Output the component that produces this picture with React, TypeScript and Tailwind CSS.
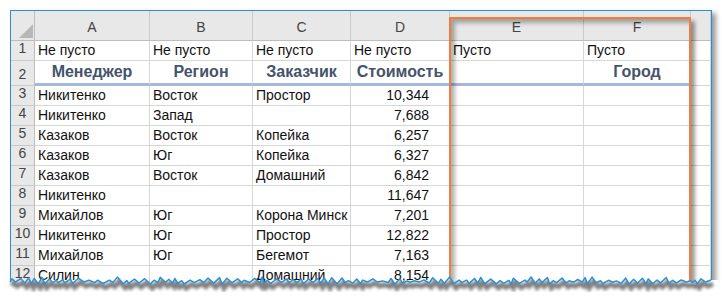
import { useMemo } from 'react'

type Row = { n: number; cells: string[] }

const rows: Row[] = [
  { n: 3, cells: ['Никитенко', 'Восток', 'Простор', '10,344'] },
  { n: 4, cells: ['Никитенко', 'Запад', '', '7,688'] },
  { n: 5, cells: ['Казаков', 'Восток', 'Копейка', '6,257'] },
  { n: 6, cells: ['Казаков', 'Юг', 'Копейка', '6,327'] },
  { n: 7, cells: ['Казаков', 'Восток', 'Домашний', '6,842'] },
  { n: 8, cells: ['Никитенко', '', '', '11,647'] },
  { n: 9, cells: ['Михайлов', 'Юг', 'Корона Минск', '7,201'] },
  { n: 10, cells: ['Никитенко', 'Юг', 'Простор', '12,822'] },
  { n: 11, cells: ['Михайлов', 'Юг', 'Бегемот', '7,163'] },
  { n: 12, cells: ['Силин', '', 'Домашний', '8,154'] },
  { n: 13, cells: ['', '', '', ''] },
]

const columns = ['A', 'B', 'C', 'D', 'E', 'F', '']
const row1 = ['Не пусто', 'Не пусто', 'Не пусто', 'Не пусто', 'Пусто', 'Пусто', '']
const row2 = ['Менеджер', 'Регион', 'Заказчик', 'Стоимость', '', 'Город', '']

const headCell = 'bg-[#e8e8e8] border-r border-b border-[#c9c9c9] text-[#444] flex justify-center'
const gridCell = 'border-r border-b border-[#d6d6d6] flex items-end px-[3px] pb-[1px] leading-[17px] whitespace-nowrap overflow-hidden'

// torn paper edge along the bottom of the sheet
function useTornEdge() {
  return useMemo(() => {
    let seed = 11
    const rnd = () => {
      seed = (seed * 16807) % 2147483647
      return seed / 2147483647
    }
    const pts: [number, number][] = [[10, 282]]
    let x = 10
    while (x < 704) {
      x += 2 + rnd() * 4
      pts.push([x, 277 + rnd() * 4])
      x += 2 + rnd() * 4
      pts.push([x, 282 + rnd() * 2])
    }
    pts.push([711, 280])
    const line = pts.map(([px, py], i) => `${i ? 'L' : 'M'}${px.toFixed(1)} ${py.toFixed(1)}`).join(' ')
    const below = `${line} L722 280 L722 302 L0 302 L0 282 Z`
    return { line, below }
  }, [])
}

export default function App() {
  const edge = useTornEdge()

  return (
    <div className="relative w-[722px] h-[302px] overflow-hidden bg-white font-['Liberation_Sans',Arial,sans-serif] text-[14px] text-[#111]">
      <div className="ml-[10px] mt-[10px] w-[702px] h-[292px] border-l border-t border-r border-[#2b8fd6] bg-white shadow-[4px_3px_5px_rgba(0,0,0,0.4)] overflow-hidden">
        <div className="grid grid-cols-[24px_115px_103px_98px_99px_134px_107px_1fr] grid-rows-[30px_20px_25px_repeat(11,20px)]">
          {/* column headers */}
          <div className={`${headCell} relative border-r-[#bdbdbd] border-b-[#bdbdbd]`}>
            <svg className="absolute right-[1px] bottom-[2px]" width="14" height="14" viewBox="0 0 14 14">
              <polygon points="14,0 14,14 0,14" fill="#b7b7b7" />
            </svg>
          </div>
          {columns.map((c, i) => (
            <div key={i} className={`${headCell} items-end pb-[2px] border-b-[#bdbdbd]`}>
              {c}
            </div>
          ))}

          {/* row 1 */}
          <div className={`${headCell} items-end pb-[1px] border-r-[#bdbdbd]`}>1</div>
          {row1.map((t, i) => (
            <div key={i} className={gridCell}>
              {t}
            </div>
          ))}

          {/* row 2: heading style */}
          <div className={`${headCell} items-center pt-[2px] border-r-[#bdbdbd]`}>2</div>
          {row2.map((t, i) => (
            <div
              key={i}
              className={`border-r border-[#d6d6d6] flex items-center justify-center pb-[1px] text-[16px] font-bold text-[#44546a] ${
                i < 6 ? 'border-b-[3px] border-b-[#a5b9df]' : 'border-b'
              }`}
            >
              {t}
            </div>
          ))}

          {/* data rows */}
          {rows.map((r) => (
            <div key={r.n} className="contents">
              <div className={`${headCell} items-end pb-[1px] border-r-[#bdbdbd]`}>{r.n}</div>
              <div className={gridCell}>{r.cells[0]}</div>
              <div className={gridCell}>{r.cells[1]}</div>
              <div className={gridCell}>{r.cells[2]}</div>
              <div className={`${gridCell} justify-end pr-[20px]`}>{r.cells[3]}</div>
              <div className={gridCell} />
              <div className={gridCell} />
              <div className={gridCell} />
            </div>
          ))}
        </div>
      </div>

      {/* orange highlight around E:F */}
      <div className="absolute left-[449px] top-[17px] w-[242px] h-[300px] border-2 border-[#f07d3a] shadow-[4px_4px_4px_rgba(0,0,0,0.4),inset_4px_4px_4px_rgba(0,0,0,0.3)]" />

      {/* torn bottom edge */}
      <svg className="absolute left-0 top-0 pointer-events-none" width="722" height="302" viewBox="0 0 722 302">
        <defs>
          <clipPath id="below">
            <path d={edge.below} />
          </clipPath>
          <filter id="blur" x="-5%" y="-50%" width="110%" height="200%">
            <feGaussianBlur stdDeviation="1.6" />
          </filter>
        </defs>
        <path d={edge.below} fill="#fff" />
        <g clipPath="url(#below)">
          <path d={edge.line} transform="translate(2 4)" fill="none" stroke="#555" strokeWidth="5" opacity="0.75" filter="url(#blur)" />
        </g>
        <path d={edge.line} fill="none" stroke="#2b8fd6" strokeWidth="1.5" strokeLinejoin="round" />
      </svg>
    </div>
  )
}
